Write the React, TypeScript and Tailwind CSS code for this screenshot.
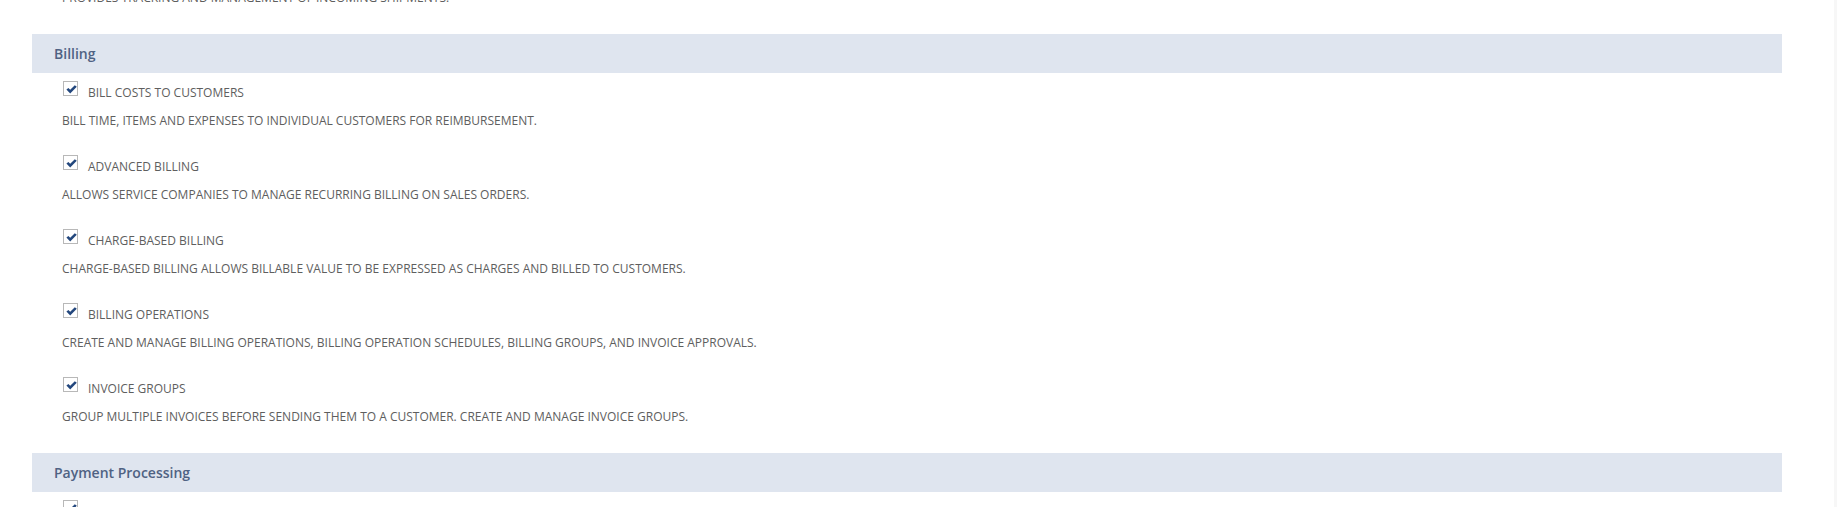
import React from 'react';

const items = [
  {
    label: 'BILL COSTS TO CUSTOMERS',
    desc: 'BILL TIME, ITEMS AND EXPENSES TO INDIVIDUAL CUSTOMERS FOR REIMBURSEMENT.',
  },
  {
    label: 'ADVANCED BILLING',
    desc: 'ALLOWS SERVICE COMPANIES TO MANAGE RECURRING BILLING ON SALES ORDERS.',
  },
  {
    label: 'CHARGE-BASED BILLING',
    desc: 'CHARGE-BASED BILLING ALLOWS BILLABLE VALUE TO BE EXPRESSED AS CHARGES AND BILLED TO CUSTOMERS.',
  },
  {
    label: 'BILLING OPERATIONS',
    desc: 'CREATE AND MANAGE BILLING OPERATIONS, BILLING OPERATION SCHEDULES, BILLING GROUPS, AND INVOICE APPROVALS.',
  },
  {
    label: 'INVOICE GROUPS',
    desc: 'GROUP MULTIPLE INVOICES BEFORE SENDING THEM TO A CUSTOMER. CREATE AND MANAGE INVOICE GROUPS.',
  },
];

function CheckBox() {
  return (
    <span className="w-[15px] h-[15px] border border-[#b8b8b8] bg-white block relative shrink-0">
      <svg className="absolute left-[2px] top-[3px]" width="11" height="9" viewBox="0 0 11 9">
        <path d="M0.4 4.6 L2.4 3 L4.2 4.8 L8.8 0.2 L10.8 1.8 L4.2 8.4 Z" fill="#23477d" />
      </svg>
    </span>
  );
}

function SectionHeader({ title }: { title: string }) {
  return (
    <div className="h-[39px] bg-[#dfe5ef] flex items-center pl-[22px]">
      <span className="text-[14px] font-semibold text-[#4f6283]">{title}</span>
    </div>
  );
}

function FeatureItem({ label, desc }: { label: string; desc: string }) {
  return (
    <div className="h-[74px] pl-[30px] pt-[8px]">
      <div className="flex items-start gap-[10px] h-[15px] pl-px">
        <CheckBox />
        <span className="mt-[4px] text-[12px] leading-[16px] text-[#5e5e5e] whitespace-nowrap">{label}</span>
      </div>
      <p className="mt-[17px] text-[12px] leading-[16px] text-[#5e5e5e]">{desc}</p>
    </div>
  );
}

export default function App() {
  return (
    <div
      className="w-[1837px] h-[507px] overflow-hidden bg-white flex"
      style={{ fontFamily: '"Open Sans", "Liberation Sans", sans-serif' }}
    >
      <div className="flex-1">
        <div className="w-[1750px] ml-[32px]">
          <p className="-mt-[10px] pl-[30px] text-[12px] leading-[16px] text-[#5e5e5e]">
            PROVIDES TRACKING AND MANAGEMENT OF INCOMING SHIPMENTS.
          </p>
          <div className="mt-[28px]">
            <SectionHeader title="Billing" />
          </div>
          {items.map((it) => (
            <FeatureItem key={it.label} label={it.label} desc={it.desc} />
          ))}
          <div className="mt-[10px]">
            <SectionHeader title="Payment Processing" />
          </div>
          <FeatureItem label="CREDIT CARD PROCESSING" desc="" />
        </div>
      </div>
      <div className="w-[3px] bg-[#f7f7f7]" />
    </div>
  );
}
